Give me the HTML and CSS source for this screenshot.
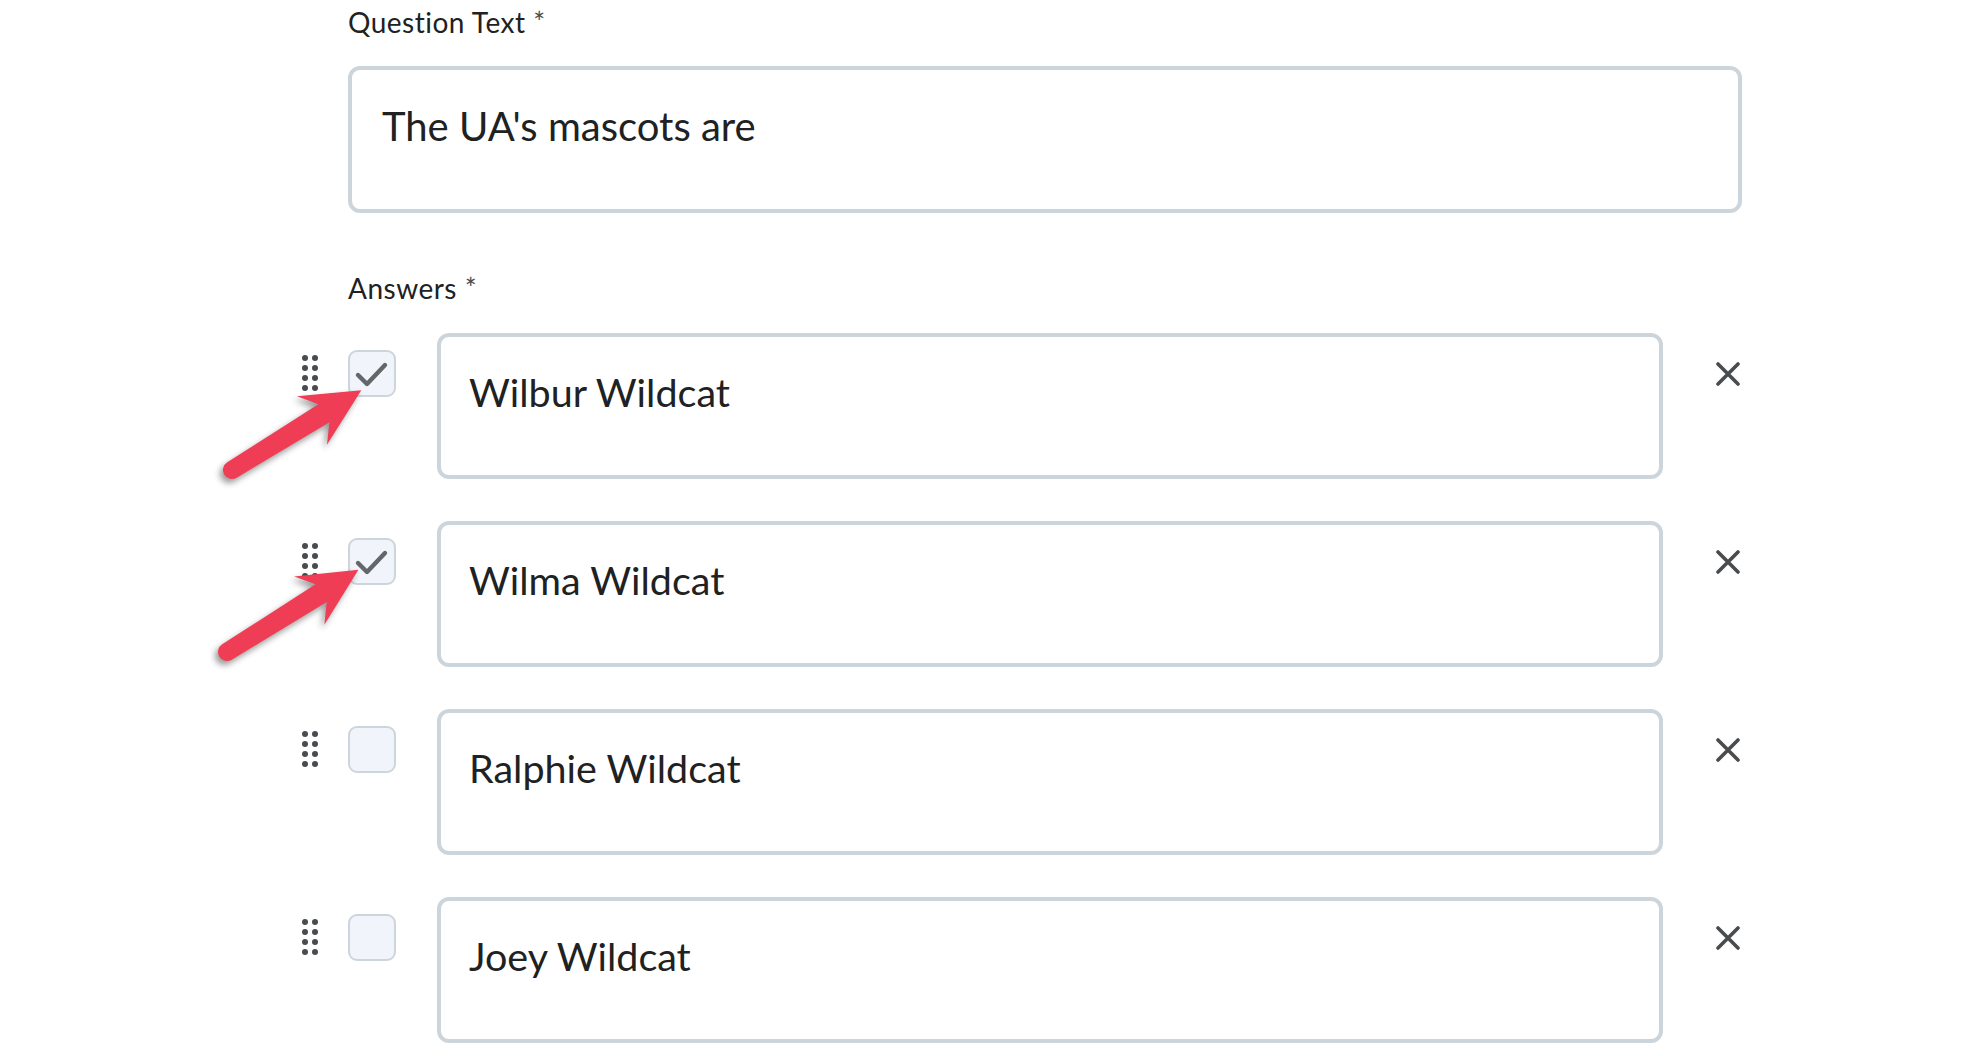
FILE: index.html
```html
<!DOCTYPE html>
<html lang="en">
<head>
<meta charset="utf-8">
<title>Question editor</title>
<link rel="stylesheet" href="styles.css">
</head>
<body>
<div class="page">
  <main class="form">
    <label class="field-label">Question Text <span class="req">*</span></label>
    <div class="question-box">The UA's mascots are</div>

    <label class="field-label answers-label">Answers <span class="req">*</span></label>
    <div class="answers">
      <div class="answer-row">
        <svg class="handle" width="20" height="62" viewBox="0 0 20 62"><g fill="#494c4e"><circle cx="5" cy="25" r="3"/><circle cx="15" cy="25" r="3"/><circle cx="5" cy="35" r="3"/><circle cx="15" cy="35" r="3"/><circle cx="5" cy="45" r="3"/><circle cx="15" cy="45" r="3"/><circle cx="5" cy="55" r="3"/><circle cx="15" cy="55" r="3"/></g></svg>
        <div class="checkbox"><svg width="44" height="43" viewBox="0 0 44 43"><path d="M8 23 L17 32 L35 13" fill="none" stroke="#63676a" stroke-width="4.4" stroke-linecap="round" stroke-linejoin="round"/></svg></div>
        <div class="answer-box">Wilbur Wildcat</div>
        <svg class="remove" width="24" height="24" viewBox="0 0 24 24"><path d="M2 2 L22 22 M22 2 L2 22" stroke="#494c4e" stroke-width="3.6" stroke-linecap="round"/></svg>
      </div>
      <div class="answer-row">
        <svg class="handle" width="20" height="62" viewBox="0 0 20 62"><g fill="#494c4e"><circle cx="5" cy="25" r="3"/><circle cx="15" cy="25" r="3"/><circle cx="5" cy="35" r="3"/><circle cx="15" cy="35" r="3"/><circle cx="5" cy="45" r="3"/><circle cx="15" cy="45" r="3"/><circle cx="5" cy="55" r="3"/><circle cx="15" cy="55" r="3"/></g></svg>
        <div class="checkbox"><svg width="44" height="43" viewBox="0 0 44 43"><path d="M8 23 L17 32 L35 13" fill="none" stroke="#63676a" stroke-width="4.4" stroke-linecap="round" stroke-linejoin="round"/></svg></div>
        <div class="answer-box">Wilma Wildcat</div>
        <svg class="remove" width="24" height="24" viewBox="0 0 24 24"><path d="M2 2 L22 22 M22 2 L2 22" stroke="#494c4e" stroke-width="3.6" stroke-linecap="round"/></svg>
      </div>
      <div class="answer-row">
        <svg class="handle" width="20" height="62" viewBox="0 0 20 62"><g fill="#494c4e"><circle cx="5" cy="25" r="3"/><circle cx="15" cy="25" r="3"/><circle cx="5" cy="35" r="3"/><circle cx="15" cy="35" r="3"/><circle cx="5" cy="45" r="3"/><circle cx="15" cy="45" r="3"/><circle cx="5" cy="55" r="3"/><circle cx="15" cy="55" r="3"/></g></svg>
        <div class="checkbox"></div>
        <div class="answer-box">Ralphie Wildcat</div>
        <svg class="remove" width="24" height="24" viewBox="0 0 24 24"><path d="M2 2 L22 22 M22 2 L2 22" stroke="#494c4e" stroke-width="3.6" stroke-linecap="round"/></svg>
      </div>
      <div class="answer-row">
        <svg class="handle" width="20" height="62" viewBox="0 0 20 62"><g fill="#494c4e"><circle cx="5" cy="25" r="3"/><circle cx="15" cy="25" r="3"/><circle cx="5" cy="35" r="3"/><circle cx="15" cy="35" r="3"/><circle cx="5" cy="45" r="3"/><circle cx="15" cy="45" r="3"/><circle cx="5" cy="55" r="3"/><circle cx="15" cy="55" r="3"/></g></svg>
        <div class="checkbox"></div>
        <div class="answer-box">Joey Wildcat</div>
        <svg class="remove" width="24" height="24" viewBox="0 0 24 24"><path d="M2 2 L22 22 M22 2 L2 22" stroke="#494c4e" stroke-width="3.6" stroke-linecap="round"/></svg>
      </div>
    </div>
  </main>

  <svg class="annotations" width="1978" height="1056" viewBox="0 0 1978 1056">
    <g class="arrow-shape" fill="#ef3d55">
      <path transform="translate(232 470) rotate(-31.7)" d="M0 -9 L108 -10.5 L94 -28.5 L152 0 L94 28.5 L108 10.5 L0 9 A9 9 0 0 1 0 -9 Z"/>
      <path transform="translate(227 652) rotate(-32)" d="M0 -9 L111 -10.5 L97 -28.5 L155 0 L97 28.5 L111 10.5 L0 9 A9 9 0 0 1 0 -9 Z"/>
    </g>
  </svg>
</div>
</body>
</html>
```

FILE: styles.css
```css
html, body {
  margin: 0;
  padding: 0;
  background: #ffffff;
}

body {
  font-family: Lato, "Open Sans", "Liberation Sans", sans-serif;
  color: #202122;
}

.page {
  position: relative;
  width: 1978px;
  height: 1056px;
  overflow: hidden;
}

.form {
  width: 1394px;
  margin-left: 348px;
  padding-top: 5px;
  display: flex;
  flex-direction: column;
  align-items: flex-start;
}

.field-label {
  display: block;
  font-size: 28px;
  line-height: 34px;
  letter-spacing: 0.5px;
  color: #202122;
}

.req {
  color: #494c4e;
}

.question-box {
  box-sizing: border-box;
  width: 1394px;
  height: 147px;
  margin-top: 27px;
  border: 4px solid #cdd5dc;
  border-radius: 12px;
  padding: 32px 30px;
  font-size: 40px;
  line-height: 48px;
  color: #202122;
}

.answers-label {
  margin-top: 58px;
}

.answers {
  margin-top: 28px;
  margin-left: -48px;
  display: flex;
  flex-direction: column;
  gap: 42px;
}

.answer-row {
  display: flex;
  align-items: flex-start;
  height: 146px;
}

.handle {
  display: block;
  margin-right: 28px;
}

.checkbox {
  box-sizing: border-box;
  width: 48px;
  height: 47px;
  margin-top: 17px;
  margin-right: 41px;
  border: 2px solid #cdd5dc;
  border-radius: 9px;
  background: #f1f5fb;
}

.checkbox svg {
  display: block;
}

.answer-box {
  box-sizing: border-box;
  width: 1226px;
  height: 146px;
  border: 4px solid #cdd5dc;
  border-radius: 12px;
  padding: 31px 28px;
  font-size: 39.5px;
  line-height: 48px;
  color: #202122;
}

.remove {
  display: block;
  margin-left: 53px;
  margin-top: 29px;
}

.annotations {
  position: absolute;
  left: 0;
  top: 0;
  pointer-events: none;
}

.arrow-shape {
  filter: drop-shadow(-3px 4px 3px rgba(0, 0, 0, 0.4));
}
```
